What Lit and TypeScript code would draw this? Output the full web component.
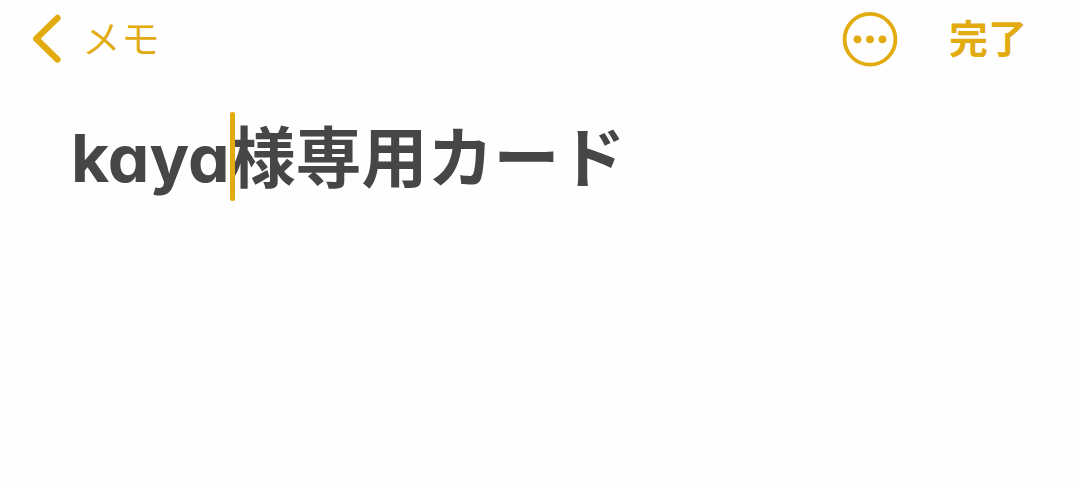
import { LitElement, html, css } from "lit";
import { customElement, property } from "lit/decorators.js";

@customElement("notes-toolbar")
class NotesToolbar extends LitElement {
  static styles = css`
    :host { display: block; }
    .bar {
      display: flex;
      align-items: center;
      justify-content: space-between;
      height: 78px;
      padding: 0 53px 0 30px;
    }
    .actions { display: flex; align-items: center; gap: 51px; }
    button {
      display: flex;
      align-items: center;
      gap: 20px;
      margin: 0;
      padding: 0;
      border: 0;
      background: none;
      color: #e2ac11;
      font: 400 39px/56px "Noto Sans CJK JP", sans-serif;
      cursor: pointer;
    }
    .label { padding-bottom: 6px; }
    .back { font-weight: 350; }
    .done { font-weight: 700; }
    svg { display: block; flex: none; }
  `;

  render() {
    return html`
      <header class="bar">
        <button type="button" class="back">
          <svg width="32" height="50" viewBox="0 0 32 50" fill="none" stroke="currentColor"
            stroke-width="6.4" stroke-linecap="round" stroke-linejoin="round" aria-hidden="true">
            <path d="M27.5 4 6.2 24.8 27.5 45.5" />
          </svg>
          <span class="label">メモ</span>
        </button>
        <div class="actions">
          <button type="button" aria-label="その他">
            <svg width="56" height="56" viewBox="0 0 56 56" fill="currentColor" aria-hidden="true">
              <circle cx="28" cy="28.3" r="25.4" fill="none" stroke="currentColor" stroke-width="3.8" />
              <circle cx="15.5" cy="28.3" r="3.9" />
              <circle cx="28" cy="28.3" r="3.9" />
              <circle cx="40.5" cy="28.3" r="3.9" />
            </svg>
          </button>
          <button type="button" class="done"><span class="label">完了</span></button>
        </div>
      </header>
    `;
  }
}

@customElement("note-editor")
class NoteEditor extends LitElement {
  @property() text = "";

  static styles = css`
    :host { display: flex; flex-direction: column; }
    .note {
      position: relative;
      display: flex;
      flex: 1;
      padding: 35px 71px 0;
    }
    textarea {
      flex: 1;
      min-width: 0;
      margin: 0;
      padding: 0;
      border: 0;
      outline: 0;
      resize: none;
      background: none;
      color: #464646;
      caret-color: #e2ac11;
      font: 700 66px/90px Inter, "Noto Sans CJK JP", sans-serif;
      font-feature-settings: "cv11";
    }
    .caret {
      position: absolute;
      top: 34px;
      left: 230px;
      width: 5px;
      height: 89px;
      border-radius: 2px;
      background: #e2ac11;
    }
  `;

  render() {
    return html`
      <div class="note">
        <textarea aria-label="メモ" spellcheck="false" .value=${this.text}></textarea>
        <span class="caret"></span>
      </div>
    `;
  }
}

@customElement("app-root")
class AppRoot extends LitElement {
  static styles = css`
    :host {
      display: flex;
      flex-direction: column;
      min-height: 100vh;
      background: #fefefe;
    }
    note-editor { flex: 1; }
  `;

  render() {
    return html`
      <notes-toolbar></notes-toolbar>
      <note-editor text="kaya様専用カード"></note-editor>
    `;
  }
}
